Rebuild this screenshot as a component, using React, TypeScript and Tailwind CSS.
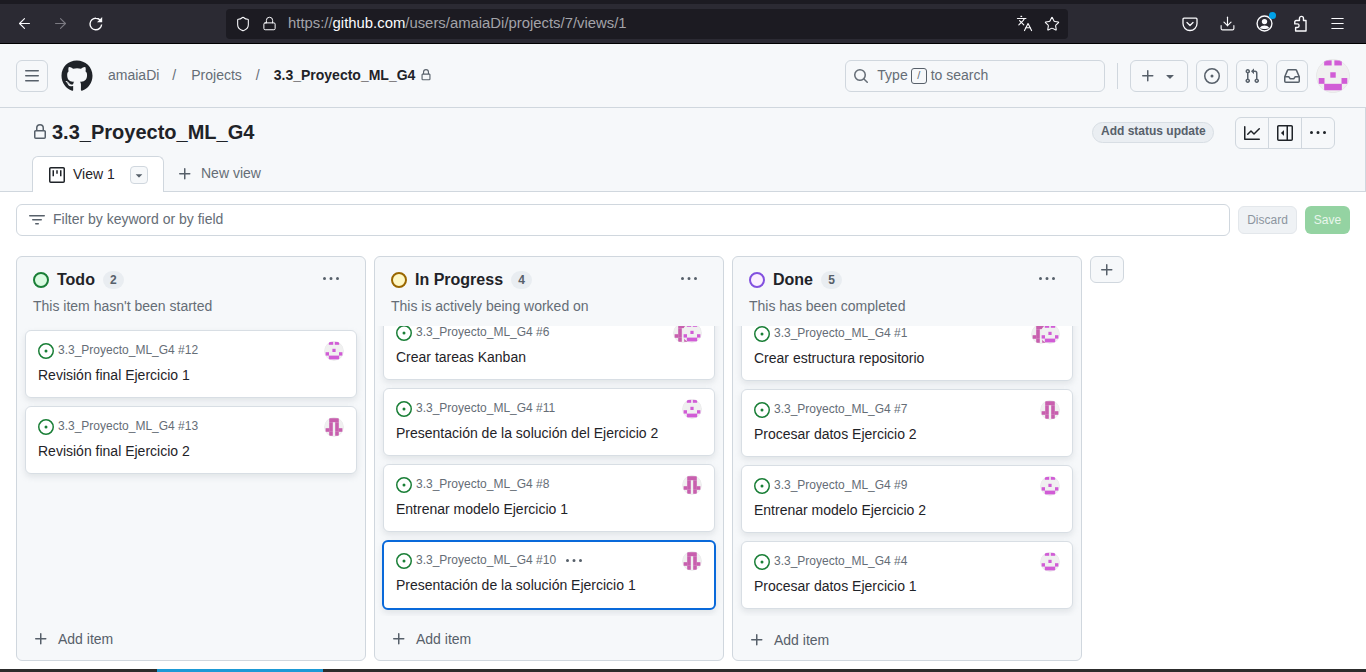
import { FaGithub } from "react-icons/fa";
import { ArrowLeft, ArrowRight, Download, Languages, Lock, Menu, Shield, Star } from "lucide-react";
import type { ReactNode } from "react";

// octicons, 16px set
const oct = {
  issueOpened: [
    "M8 9.5a1.5 1.5 0 1 0 0-3 1.5 1.5 0 0 0 0 3Z",
    "M8 0a8 8 0 1 1 0 16A8 8 0 0 1 8 0ZM1.5 8a6.5 6.5 0 1 0 13 0 6.5 6.5 0 0 0-13 0Z",
  ],
  issueClosed: [
    "M11.28 6.78a.75.75 0 0 0-1.06-1.06L7.25 8.69 5.78 7.22a.75.75 0 0 0-1.06 1.06l2 2a.75.75 0 0 0 1.06 0l3.5-3.5Z",
    "M16 8A8 8 0 1 1 0 8a8 8 0 0 1 16 0Zm-1.5 0a6.5 6.5 0 1 0-13 0 6.5 6.5 0 0 0 13 0Z",
  ],
  kebab: ["M8 9a1.5 1.5 0 1 0 0-3 1.5 1.5 0 0 0 0 3ZM1.5 9a1.5 1.5 0 1 0 0-3 1.5 1.5 0 0 0 0 3Zm13 0a1.5 1.5 0 1 0 0-3 1.5 1.5 0 0 0 0 3Z"],
  plus: ["M7.75 2a.75.75 0 0 1 .75.75V7h4.25a.75.75 0 0 1 0 1.5H8.5v4.25a.75.75 0 0 1-1.5 0V8.5H2.75a.75.75 0 0 1 0-1.5H7V2.75A.75.75 0 0 1 7.75 2Z"],
  lock: ["M4 4a4 4 0 0 1 8 0v2h.25c.966 0 1.75.784 1.75 1.75v5.5A1.75 1.75 0 0 1 12.25 15h-8.5A1.75 1.75 0 0 1 2 13.25v-5.5C2 6.784 2.784 6 3.75 6H4Zm8.25 3.5h-8.5a.25.25 0 0 0-.25.25v5.5c0 .138.112.25.25.25h8.5a.25.25 0 0 0 .25-.25v-5.5a.25.25 0 0 0-.25-.25ZM10.5 6V4a2.5 2.5 0 1 0-5 0v2Z"],
  graph: ["M1.5 1.75V13.5h13.75a.75.75 0 0 1 0 1.5H.75a.75.75 0 0 1-.75-.75V1.75a.75.75 0 0 1 1.5 0Zm14.28 2.53-5.25 5.25a.75.75 0 0 1-1.06 0L7 7.06 4.28 9.78a.751.751 0 0 1-1.042-.018.751.751 0 0 1-.018-1.042l3.25-3.25a.75.75 0 0 1 1.06 0L10 7.94l4.72-4.72a.751.751 0 0 1 1.042.018.751.751 0 0 1 .018 1.042Z"],
  pull: ["M1.5 3.25a2.25 2.25 0 1 1 3 2.122v5.256a2.251 2.251 0 1 1-1.5 0V5.372A2.25 2.25 0 0 1 1.5 3.25Zm5.677-.177L9.573.677A.25.25 0 0 1 10 .854V2.5h1A2.5 2.5 0 0 1 13.5 5v5.628a2.251 2.251 0 1 1-1.5 0V5a1 1 0 0 0-1-1h-1v1.646a.25.25 0 0 1-.427.177L7.177 3.427a.25.25 0 0 1 0-.354ZM3.75 2.5a.75.75 0 1 0 0 1.5.75.75 0 0 0 0-1.5Zm0 9.5a.75.75 0 1 0 0 1.5.75.75 0 0 0 0-1.5Zm8.25.75a.75.75 0 1 0 1.5 0 .75.75 0 0 0-1.5 0Z"],
  inbox: ["M2.8 2.06A1.75 1.75 0 0 1 4.41 1h7.18c.7 0 1.333.417 1.61 1.06l2.74 6.395c.04.093.06.194.06.295v4.5A1.75 1.75 0 0 1 14.25 15H1.75A1.75 1.75 0 0 1 0 13.25v-4.5c0-.101.02-.202.06-.295Zm1.61.44a.25.25 0 0 0-.23.152L1.887 8H4.75a.75.75 0 0 1 .6.3L6.625 10h2.75l1.275-1.7a.75.75 0 0 1 .6-.3h2.863L11.82 2.652a.25.25 0 0 0-.23-.152Zm10.09 7h-2.875l-1.275 1.7a.75.75 0 0 1-.6.3h-3.5a.75.75 0 0 1-.6-.3L4.375 9.5H1.5v3.75c0 .138.112.25.25.25h12.5a.25.25 0 0 0 .25-.25Z"],
  search: ["M10.68 11.74a6 6 0 0 1-7.922-8.982 6 6 0 0 1 8.982 7.922l3.04 3.04a.749.749 0 0 1-.326 1.275.749.749 0 0 1-.734-.215ZM11.5 7a4.499 4.499 0 1 0-8.997 0A4.499 4.499 0 0 0 11.5 7Z"],
  filter: ["M.75 3h14.5a.75.75 0 0 1 0 1.5H.75a.75.75 0 0 1 0-1.5ZM3 7.75A.75.75 0 0 1 3.75 7h8.5a.75.75 0 0 1 0 1.5h-8.5A.75.75 0 0 1 3 7.75Zm3 4a.75.75 0 0 1 .75-.75h2.5a.75.75 0 0 1 0 1.5h-2.5a.75.75 0 0 1-.75-.75Z"],
  triangle: ["m4.427 7.427 3.396 3.396a.25.25 0 0 0 .354 0l3.396-3.396A.25.25 0 0 0 11.396 7H4.604a.25.25 0 0 0-.177.427Z"],
  sidebar: [
    "m4.177 7.823 2.396-2.396A.25.25 0 0 1 7 5.604v4.792a.25.25 0 0 1-.427.177L4.177 8.177a.25.25 0 0 1 0-.354Z",
    "M0 1.75C0 .784.784 0 1.75 0h12.5C15.216 0 16 .784 16 1.75v12.5A1.75 1.75 0 0 1 14.25 16H1.75A1.75 1.75 0 0 1 0 14.25Zm1.75-.25a.25.25 0 0 0-.25.25v12.5c0 .138.112.25.25.25H9.5v-13Zm12.5 13a.25.25 0 0 0 .25-.25V1.75a.25.25 0 0 0-.25-.25H11v13Z",
  ],
  bars: ["M1 2.75A.75.75 0 0 1 1.75 2h12.5a.75.75 0 0 1 0 1.5H1.75A.75.75 0 0 1 1 2.75Zm0 5A.75.75 0 0 1 1.75 7h12.5a.75.75 0 0 1 0 1.5H1.75A.75.75 0 0 1 1 7.75ZM1.75 12h12.5a.75.75 0 0 1 0 1.5H1.75a.75.75 0 0 1 0-1.5Z"],
  board: [
    "M0 1.75C0 .784.784 0 1.75 0h12.5C15.216 0 16 .784 16 1.75v12.5A1.75 1.75 0 0 1 14.25 16H1.75A1.75 1.75 0 0 1 0 14.25Zm1.75-.25a.25.25 0 0 0-.25.25v12.5c0 .138.112.25.25.25h12.5a.25.25 0 0 0 .25-.25V1.75a.25.25 0 0 0-.25-.25Z",
    "M3.5 3.25h1.5v6h-1.5ZM7.25 3.25h1.5v3.5h-1.5ZM11 3.25h1.5v6H11Z",
  ],
};

function Oct({ d, size = 16, className = "" }: { d: string[]; size?: number; className?: string }) {
  return (
    <svg width={size} height={size} viewBox="0 0 16 16" fill="currentColor" aria-hidden="true" className={`shrink-0 ${className}`}>
      {d.map((p, i) => (
        <path key={i} d={p} />
      ))}
    </svg>
  );
}

// identicons: [x, y, w, h] cells on a 10 unit grid
const smile = [
  [2.4, 0.4, 2.2, 1.5],
  [5.4, 0.4, 2.2, 1.5],
  [4.2, 3.9, 1.6, 1.6],
  [0.8, 5.6, 1.7, 1.7],
  [7.5, 5.6, 1.7, 1.7],
  [2.4, 7.3, 5.2, 1.9],
];
const legs = [
  [2.6, 0.6, 4.8, 2],
  [2.6, 2.6, 1.8, 4.8],
  [5.6, 2.6, 1.8, 4.8],
  [0.8, 5.6, 1.9, 1.8],
  [7.3, 5.6, 1.9, 1.8],
  [2.6, 7.4, 1.8, 2],
  [5.6, 7.4, 1.8, 2],
];

function Avatar({ kind, size = 20 }: { kind: "smile" | "legs"; size?: number }) {
  const cells = kind === "smile" ? smile : legs;
  return (
    <svg width={size} height={size} viewBox="0 0 10 10" aria-hidden="true" className="shrink-0 rounded-full">
      <circle cx="5" cy="5" r="5" fill="#f0f0f0" />
      {cells.map((c, i) => (
        <rect key={i} x={c[0]} y={c[1]} width={c[2]} height={c[3]} fill={kind === "smile" ? "#d15cd6" : "#c85fae"} />
      ))}
      <circle cx="5" cy="5" r="4.9" fill="none" stroke="#d8dadc" strokeWidth="0.12" />
    </svg>
  );
}

function StatusDot({ ring, fill }: { ring: string; fill: string }) {
  return (
    <svg width="16" height="16" viewBox="0 0 16 16" aria-hidden="true" className="shrink-0">
      <circle cx="8" cy="8" r="7" fill={fill} stroke={ring} strokeWidth="2" />
    </svg>
  );
}

type CardData = {
  num: number;
  title: string;
  avatars: ("smile" | "legs")[];
  focused?: boolean;
};

function Card({ card, done, first }: { card: CardData; done?: boolean; first?: string }) {
  return (
    <div
      className={`relative shrink-0 rounded-md bg-white shadow-[0_3px_6px_rgba(140,149,159,0.2)] ${
        card.focused
          ? "-mx-px h-[70px] border-2 border-[#0969da] pl-[12px] pr-[12px] pt-[9px]"
          : "h-[68px] border border-[#d8dee4] pl-[12px] pr-3 pt-[10px]"
      } ${first ?? ""}`}
    >
      <div className="flex h-[20px] items-center">
        {done ? (
          <Oct d={oct.issueClosed} className="text-[#8250df]" />
        ) : (
          <Oct d={oct.issueOpened} className="text-[#1a7f37]" />
        )}
        <span className="-mt-[2px] ml-1 text-xs text-[#656d76]">3.3_Proyecto_ML_G4 #{card.num}</span>
        {card.focused && <Oct d={oct.kebab} className="ml-[10px] text-[#57606a]" />}
        <div className="ml-auto flex">
          {card.avatars.map((a, i) => (
            <span key={i} className={i > 0 ? "-ml-[11px]" : ""}>
              <Avatar kind={a} />
            </span>
          ))}
        </div>
      </div>
      <div className="mt-[4px] text-sm leading-5 text-[#1f2328]">{card.title}</div>
    </div>
  );
}

function Column({
  name,
  count,
  desc,
  ring,
  fill,
  cards,
  done,
  first,
  addOffset,
}: {
  name: string;
  count: number;
  desc: string;
  ring: string;
  fill: string;
  cards: CardData[];
  done?: boolean;
  first: string;
  addOffset?: string;
}) {
  return (
    <section className="flex h-[405px] w-[350px] shrink-0 flex-col overflow-hidden rounded-md border border-[#d0d7de] bg-[#f6f8fa]">
      <header className="h-[69px] shrink-0 pl-4 pr-4 pt-[13px]">
        <div className="flex h-[20px] items-center">
          <StatusDot ring={ring} fill={fill} />
          <h2 className="ml-2 text-base font-bold text-[#1f2328]">{name}</h2>
          <span className="ml-2 flex h-[18px] w-[21px] items-center justify-center rounded-full bg-[#e9edf1] text-xs font-bold text-[#57606a]">
            {count}
          </span>
          <Oct d={oct.kebab} className="ml-auto mr-[10px] -mt-[3px] text-[#57606a]" />
        </div>
        <p className="mt-[6px] text-sm leading-5 text-[#656d76]">{desc}</p>
      </header>
      <div className="flex min-h-0 flex-1 flex-col gap-2 overflow-hidden px-2">
        {cards.map((c, i) => (
          <Card key={c.num} card={c} done={done} first={i === 0 ? first : ""} />
        ))}
      </div>
      <div className={`flex h-[44px] shrink-0 items-center pl-4 text-sm text-[#57606a] ${addOffset ?? "pt-[1px]"}`}>
        <Oct d={oct.plus} className="text-[#57606a]" />
        <span className="ml-[9px]">Add item</span>
      </div>
    </section>
  );
}

function IconBtn({ children }: { children: ReactNode }) {
  return (
    <span className="flex h-8 w-8 items-center justify-center rounded-md border border-[#d0d7de] text-[#57606a]">
      {children}
    </span>
  );
}

const todo: CardData[] = [
  { num: 12, title: "Revisión final Ejercicio 1", avatars: ["smile"] },
  { num: 13, title: "Revisión final Ejercicio 2", avatars: ["legs"] },
];
const progress: CardData[] = [
  { num: 6, title: "Crear tareas Kanban", avatars: ["legs", "smile"] },
  { num: 11, title: "Presentación de la solución del Ejercicio 2", avatars: ["smile"] },
  { num: 8, title: "Entrenar modelo Ejercicio 1", avatars: ["legs"] },
  { num: 10, title: "Presentación de la solución Ejercicio 1", avatars: ["legs"], focused: true },
];
const doneCards: CardData[] = [
  { num: 1, title: "Crear estructura repositorio", avatars: ["legs", "smile"] },
  { num: 7, title: "Procesar datos Ejercicio 2", avatars: ["legs"] },
  { num: 9, title: "Entrenar modelo Ejercicio 2", avatars: ["smile"] },
  { num: 4, title: "Procesar datos Ejercicio 1", avatars: ["smile"] },
];

export default function App() {
  return (
    <div className="flex h-[672px] w-[1366px] flex-col overflow-hidden bg-white font-['Liberation_Sans',Arial,sans-serif]">
      {/* browser chrome */}
      <div className="flex h-[44px] shrink-0 items-center border-t-4 border-b border-t-[#1c1b22] border-b-black bg-[#2b2a33] pl-4 text-[#fbfbfe]">
        <ArrowLeft size={17} strokeWidth={1.6} />
        <ArrowRight size={17} strokeWidth={1.6} className="ml-[19px] text-[#7b7a82]" />
        <svg width="16" height="16" viewBox="0 0 16 16" fill="none" className="ml-[19px]" aria-hidden="true">
          <path d="M13.6 8.5A5.8 5.8 0 1 1 8 2.2c1.7 0 3.2.7 4.2 1.9" stroke="currentColor" strokeWidth="1.4" />
          <path d="M14.2 1v5.2H9z" fill="currentColor" />
        </svg>
        <div className="ml-[122px] flex h-[30px] w-[842px] items-center rounded bg-[#1c1b22] pl-[9px]">
          <Shield size={16} strokeWidth={1.6} />
          <Lock size={15} strokeWidth={1.6} className="ml-[11px]" />
          <span className="-mt-px ml-[11px] text-[14.87px] text-[#a3a3a9]">
            https://<span className="text-[#fbfbfe]">github.com</span>/users/amaiaDi/projects/7/views/1
          </span>
          <Languages size={17} strokeWidth={1.6} className="ml-auto" />
          <Star size={16} strokeWidth={1.6} className="ml-[11px] mr-[8px]" />
        </div>
        <svg width="16" height="16" viewBox="0 0 16 16" fill="none" stroke="currentColor" strokeWidth="1.3" className="ml-[114px]" aria-hidden="true">
          <path d="M2 2.2h12a1 1 0 0 1 1 1v4.3a7 7 0 0 1-14 0V3.2a1 1 0 0 1 1-1z" />
          <path d="M5 6.5l3 3 3-3" strokeLinecap="round" strokeLinejoin="round" />
        </svg>
        <Download size={17} strokeWidth={1.6} className="ml-[21px]" />
        <span className="relative ml-[20px]">
          <svg width="17" height="17" viewBox="0 0 16 16" fill="none" aria-hidden="true">
            <circle cx="8" cy="8" r="7" stroke="currentColor" strokeWidth="1.3" />
            <circle cx="8" cy="6.2" r="2.5" fill="currentColor" />
            <path d="M3.5 12.2c1-1.7 2.6-2.4 4.5-2.4s3.5.7 4.5 2.4c-2.4 1.4-6.6 1.4-9 0z" fill="currentColor" />
          </svg>
          <span className="absolute -right-[3px] -top-[3px] h-[7px] w-[7px] rounded-full bg-[#00a2e8]" />
        </span>
        <svg width="17" height="17" viewBox="0 0 16 16" fill="none" stroke="currentColor" strokeWidth="1.3" strokeLinejoin="round" className="ml-[19px]" aria-hidden="true">
          <path d="M3.8 5.2H7V3.2a1.9 1.9 0 0 1 3.8 0v2h2.4V15H3.4v-3.2H5a1.7 1.7 0 0 0 0-3.4H2.6V6.4a1.2 1.2 0 0 1 1.2-1.2z" />
        </svg>
        <Menu size={17} strokeWidth={1.6} className="ml-[20px]" />
      </div>

      {/* github header */}
      <div className="flex h-[64px] shrink-0 items-center border-b border-[#d0d7de] bg-[#f6f8fa] pl-4 text-sm">
        <IconBtn>
          <Oct d={oct.bars} />
        </IconBtn>
        <FaGithub size={32} className="ml-[13px] text-[#1f2328]" />
        <span className="-mt-[2px] ml-[15px] text-[#656d76]">amaiaDi</span>
        <span className="-mt-[2px] ml-[13px] text-[#656d76]">/</span>
        <span className="-mt-[2px] ml-[15px] text-[#656d76]">Projects</span>
        <span className="-mt-[2px] ml-[14px] text-[#656d76]">/</span>
        <span className="-mt-[2px] ml-[14px] font-bold text-[#1f2328]">3.3_Proyecto_ML_G4</span>
        <Oct d={oct.lock} size={12} className="ml-[5px] -mt-px text-[#57606a]" />
        <div className="ml-[413px] flex h-8 w-[260px] items-center rounded-md border border-[#d0d7de] pl-[7px] text-[#656d76]">
          <Oct d={oct.search} />
          <span className="-mt-[2px] ml-[8px]">Type</span>
          <span className="ml-[3px] mr-[4px] flex h-[16px] w-[16px] items-center justify-center rounded-[3px] border border-[#57606a] text-[11px] leading-none">
            /
          </span>
          <span className="-mt-[2px]">to search</span>
        </div>
        <span className="ml-3 h-[26px] w-px bg-[#d0d7de]" />
        <span className="ml-3 flex h-8 w-[58px] items-center justify-center gap-[6px] rounded-md border border-[#d0d7de] text-[#57606a]">
          <Oct d={oct.plus} />
          <Oct d={oct.triangle} />
        </span>
        <span className="ml-2">
          <IconBtn>
            <Oct d={oct.issueOpened} />
          </IconBtn>
        </span>
        <span className="ml-2">
          <IconBtn>
            <Oct d={oct.pull} />
          </IconBtn>
        </span>
        <span className="ml-2">
          <IconBtn>
            <Oct d={oct.inbox} />
          </IconBtn>
        </span>
        <span className="ml-2">
          <Avatar kind="smile" size={34} />
        </span>
      </div>

      {/* project header + tabs */}
      <div className="flex h-[84px] shrink-0 flex-col border-b border-r border-[#d0d7de] bg-[#f6f8fa]">
        <div className="flex h-[48px] items-center pl-[32px]">
          <Oct d={oct.lock} className="text-[#57606a]" />
          <h1 className="-mt-px ml-[4px] text-xl font-bold text-[#1f2328]">3.3_Proyecto_ML_G4</h1>
          <span className="ml-[838px] flex h-[21px] w-[122px] items-center justify-center rounded-full border border-[#d8dee4] bg-[#eaeef2] pb-[2px] text-xs font-bold text-[#57606a]">
            Add status update
          </span>
          <div className="ml-[21px] mt-[2px] flex h-8 w-[100px] rounded-md border border-[#d0d7de] text-[#1f2328]">
            <span className="flex flex-1 items-center justify-center border-r border-[#d0d7de]">
              <Oct d={oct.graph} />
            </span>
            <span className="flex flex-1 items-center justify-center border-r border-[#d0d7de]">
              <Oct d={oct.sidebar} />
            </span>
            <span className="flex flex-1 items-center justify-center">
              <Oct d={oct.kebab} />
            </span>
          </div>
        </div>
        <div className="-mb-px flex h-[36px] items-end pl-[32px] text-sm">
          <div className="flex h-[36px] w-[132px] items-center rounded-t-md border border-b-0 border-[#d0d7de] bg-white pl-4">
            <Oct d={oct.board} className="text-[#1f2328]" />
            <span className="-mt-[2px] ml-2 text-[#1f2328]">View 1</span>
            <span className="ml-[15px] flex h-[18px] w-[18px] items-center justify-center rounded-[4px] border border-[#d0d7de] bg-[#f6f8fa] text-[#57606a]">
              <Oct d={oct.triangle} size={14} />
            </span>
          </div>
          <div className="flex h-[36px] items-center pl-[13px] text-[#656d76]">
            <Oct d={oct.plus} className="text-[#57606a]" />
            <span className="-mt-[2px] ml-[8px]">New view</span>
          </div>
        </div>
      </div>

      {/* filter bar */}
      <div className="flex shrink-0 items-center px-4 pb-[20px] pt-3">
        <div className="flex h-[32px] flex-1 items-center rounded-md border border-[#d0d7de] pl-[12px] text-sm text-[#656d76]">
          <Oct d={oct.filter} className="text-[#57606a]" />
          <span className="-mt-[2px] ml-2">Filter by keyword or by field</span>
        </div>
        <span className="ml-2 flex h-[28px] w-[59px] items-center justify-center rounded-md border border-[#e3e7eb] bg-[#eff2f5] text-xs text-[#8c959f]">
          Discard
        </span>
        <span className="ml-2 flex h-[28px] w-[45px] items-center justify-center rounded-md bg-[#94d3a2] text-xs text-[#e9f6ec]">
          Save
        </span>
      </div>

      {/* board */}
      <div className="flex items-start gap-2 px-4">
        <Column
          name="Todo"
          count={2}
          desc="This item hasn't been started"
          ring="#1a7f37"
          fill="#dafbe1"
          cards={todo}
          first="mt-[4px]"
        />
        <Column
          name="In Progress"
          count={4}
          desc="This is actively being worked on"
          ring="#9a6700"
          fill="#fff8c5"
          cards={progress}
          first="-mt-[14px]"
        />
        <Column
          name="Done"
          count={5}
          desc="This has been completed"
          ring="#8250df"
          fill="#fbefff"
          cards={doneCards}
          first="-mt-[13px]"
          addOffset="pt-[3px]"
        />
        <span className="flex h-[27px] w-[34px] shrink-0 items-center justify-center rounded-md border border-[#d0d7de] bg-[#f6f8fa] text-[#57606a]">
          <Oct d={oct.plus} />
        </span>
      </div>

      {/* desktop strip peeking in at the bottom */}
      <div className="mt-auto flex h-[3px] shrink-0 bg-[#2c2c2c]">
        <span className="ml-[157px] w-[166px] bg-[#1c9ad6]" />
      </div>
    </div>
  );
}
